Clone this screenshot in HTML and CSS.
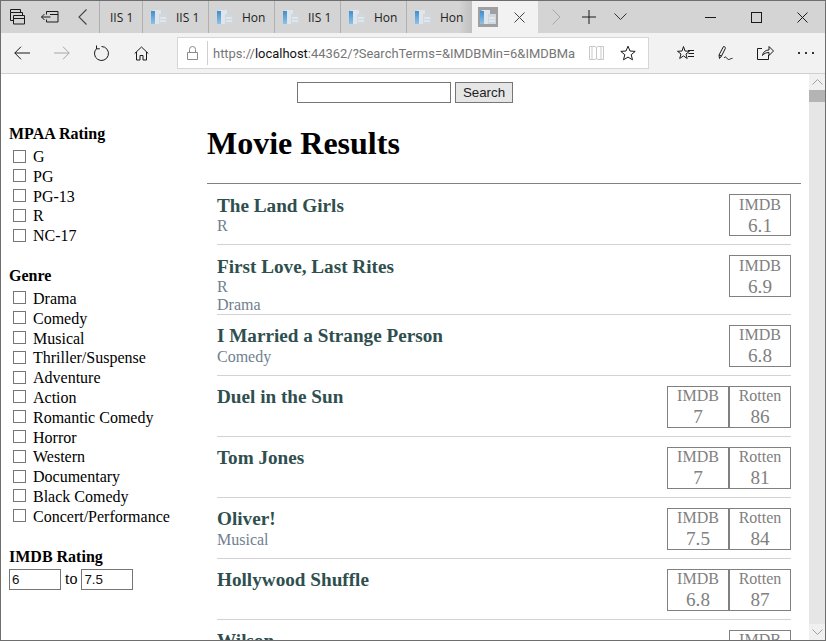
FILE: index.html
```html
<!DOCTYPE html>
<html lang="en">
<head>
<meta charset="utf-8">
<title>Movie Results</title>
<link rel="stylesheet" href="styles.css">
</head>
<body>
<svg class="defs" width="0" height="0" aria-hidden="true">
  <defs>
    <linearGradient id="favblue" x1="0" y1="0" x2="0" y2="1">
      <stop offset="0" stop-color="#3f8fd0"/>
      <stop offset="1" stop-color="#8fc2e6"/>
    </linearGradient>
  </defs>
  <symbol id="fav" viewBox="0 0 16 16">
    <path d="M2 1h8v14H2z" fill="#dfe5ea"/>
    <path d="M0 2h4v13H0z" fill="url(#favblue)"/>
    <path d="M8 5h8v10H8z" fill="#cfd8df"/>
    <path d="M9 9h6M9 12h6" stroke="#f1f4f6" fill="none"/>
  </symbol>
</svg>
<div class="window">
  <div class="tabbar">
    <div class="tabtools">
      <button class="tool"><svg width="16" height="16" viewBox="0 0 16 16"><path d="M.5 3.500V.5h10v3M.5 3.500h12v3M.5 3.500v8h3M3.500 6.500h11v8.500h-11zM3.500 9.500h11" fill="none" stroke="#1a1a1a"/></svg></button>
      <button class="tool"><svg width="18" height="12" viewBox="0 0 18 12"><path d="M.5 6h9M3.500 3 .5 6l3 3M5.500 3.500V.5h11.500v10.500H5.500V8.500M9 3.500h8" fill="none" stroke="#1a1a1a"/></svg></button>
      <button class="tool"><svg width="10" height="16" viewBox="0 0 10 16"><path d="M8.500.5 1 8l7.500 7.500" fill="none" stroke="#444" stroke-width="1.100"/></svg></button>
    </div>
    <div class="tab tab-first">IIS 1</div>
    <div class="tab"><svg class="favicon"><use href="#fav"/></svg>IIS 1</div>
    <div class="tab"><svg class="favicon"><use href="#fav"/></svg>Hon</div>
    <div class="tab"><svg class="favicon"><use href="#fav"/></svg>IIS 1</div>
    <div class="tab"><svg class="favicon"><use href="#fav"/></svg>Hon</div>
    <div class="tab tab-last"><svg class="favicon"><use href="#fav"/></svg>Hon</div>
    <div class="tab-active">
      <span class="fav-box"><svg class="favicon-a"><use href="#fav"/></svg></span>
      <svg width="11" height="11" viewBox="0 0 11 11"><path d="M.5.5l10 10M10.500.5l-10 10" stroke="#444" fill="none"/></svg>
    </div>
    <div class="tabactions">
      <svg class="ta-next" width="9" height="16" viewBox="0 0 9 16"><path d="M.5.5 8 8 .5 15.500" fill="none" stroke="#a8a8a8"/></svg>
      <svg class="ta-plus" width="14" height="14" viewBox="0 0 14 14"><path d="M7 0v14M0 7h14" stroke="#1a1a1a" fill="none"/></svg>
      <svg class="ta-down" width="13" height="8" viewBox="0 0 13 8"><path d="M.5.5l6 6 6-6" stroke="#333" fill="none"/></svg>
    </div>
    <div class="winctl">
      <span class="wc"><svg width="11" height="1" viewBox="0 0 11 1"><path d="M0 .5h11" stroke="#1a1a1a"/></svg></span>
      <span class="wc"><svg width="11" height="11" viewBox="0 0 11 11"><rect x=".5" y=".5" width="10" height="10" fill="none" stroke="#1a1a1a"/></svg></span>
      <span class="wc"><svg width="11" height="11" viewBox="0 0 11 11"><path d="M.5.5l10 10M10.500.5l-10 10" stroke="#1a1a1a" fill="none"/></svg></span>
    </div>
  </div>
  <div class="toolbar">
    <div class="nav">
      <svg width="16" height="14" viewBox="0 0 16 14"><path d="M16 7H.8M7 .7.800 7 7 13.300" fill="none" stroke="#1a1a1a"/></svg>
      <svg width="16" height="14" viewBox="0 0 16 14"><path d="M0 7h15.200M9 .7 15.200 7 9 13.300" fill="none" stroke="#a6a6a6"/></svg>
      <svg width="16" height="16" viewBox="0 0 16 16"><path d="M7.500 1.500A7 7 0 1 1 2.800 3.300M2.500 .5v3.300h3.300" fill="none" stroke="#1a1a1a"/></svg>
      <svg width="15" height="15" viewBox="0 0 15 15"><path d="M.7 7.500 7.500 1l6.800 6.500M2.500 6v8h3.500V9.500h3V14h3.500V6" fill="none" stroke="#1a1a1a"/></svg>
    </div>
    <div class="urlbar">
      <svg class="lock" width="11" height="14" viewBox="0 0 11 14"><path d="M.5 6.500h10v7H.5zM2.500 6.500V3.500a3 3 0 0 1 6 0v3" fill="none" stroke="#8a8a8a"/></svg>
      <span class="urlsep"></span>
      <span class="url">https://<b>localhost</b>:44362/?SearchTerms=&amp;IMDBMin=6&amp;IMDBMa</span>
      <svg class="read" width="15" height="14" viewBox="0 0 15 14"><path d="M.5.500h5.500l1.500 1 1.500-1h5.500v13H9l-1.500-.8-1.500.8H.5zM7.500 1.500v11.500M3 .5v13M12 .5v13" fill="none" stroke="#c8c8c8"/></svg>
      <svg class="star" width="16" height="16" viewBox="0 0 16 16"><path d="M8 1.200l2 4.800 5.200.4-4 3.300 1.300 5.100L8 12.100l-4.500 2.700 1.300-5.100-4-3.300L6 6z" fill="none" stroke="#1a1a1a"/></svg>
    </div>
    <div class="hub">
      <svg width="17" height="16" viewBox="0 0 17 16"><path d="M6.500 1.500 8 6l4.500.3-3.500 2.700 1.200 4.500-3.700-2.600-3.800 2.600 1.300-4.500L.5 6.300 5 6zM11 5.500h6M11.500 8.500h5.500M11 11.500h6" fill="none" stroke="#1a1a1a"/></svg>
      <svg width="15" height="17" viewBox="0 0 15 17"><path d="M1.500 13.500 1 10 5.500 1.500c1.500 0 2 .8 1.800 2L3.500 11zM1 10l2.500 1M6 13c2-3 3 1.500 4.500 1.500s2-1 4-1.200" fill="none" stroke="#1a1a1a"/></svg>
      <svg width="17" height="16" viewBox="0 0 17 16"><path d="M5 3.500H.5v11h11V10M5.500 10.500C6 7 8.500 5 12 5V1.500L16.500 6 12 10.500V7.500c-3 0-5 1-6.500 3z" fill="none" stroke="#1a1a1a"/></svg>
      <svg width="16" height="2" viewBox="0 0 16 2"><path d="M0 0h2v2H0zM7 0h2v2H7zM14 0h2v2h-2z" fill="#333"/></svg>
    </div>
  </div>
  <div class="viewport">
    <div class="page">
      <form class="searchbar">
        <input class="search-input" type="text" aria-label="Search">
        <button class="search-btn" type="button">Search</button>
      </form>
      <div class="columns">
        <aside class="sidebar">
          <h3 class="filter-title">MPAA Rating</h3>
          <ul class="checks">
            <li><label><input type="checkbox">G</label></li>
            <li><label><input type="checkbox">PG</label></li>
            <li><label><input type="checkbox">PG-13</label></li>
            <li><label><input type="checkbox">R</label></li>
            <li><label><input type="checkbox">NC-17</label></li>
          </ul>
          <h3 class="filter-title">Genre</h3>
          <ul class="checks">
            <li><label><input type="checkbox">Drama</label></li>
            <li><label><input type="checkbox">Comedy</label></li>
            <li><label><input type="checkbox">Musical</label></li>
            <li><label><input type="checkbox">Thriller/Suspense</label></li>
            <li><label><input type="checkbox">Adventure</label></li>
            <li><label><input type="checkbox">Action</label></li>
            <li><label><input type="checkbox">Romantic Comedy</label></li>
            <li><label><input type="checkbox">Horror</label></li>
            <li><label><input type="checkbox">Western</label></li>
            <li><label><input type="checkbox">Documentary</label></li>
            <li><label><input type="checkbox">Black Comedy</label></li>
            <li><label><input type="checkbox">Concert/Performance</label></li>
          </ul>
          <h3 class="filter-title">IMDB Rating</h3>
          <div class="range">
            <input class="range-input" type="text" value="6" aria-label="Min">
            <span>to</span>
            <input class="range-input" type="text" value="7.5" aria-label="Max">
          </div>
        </aside>
        <main class="results">
          <h1 class="results-title">Movie Results</h1>
          <hr class="rule">
          <article class="movie">
            <div class="info"><h4>The Land Girls</h4><p>R</p></div>
            <div class="scores"><div class="score">IMDB<b>6.1</b></div></div>
          </article>
          <article class="movie">
            <div class="info"><h4>First Love, Last Rites</h4><p>R</p><p>Drama</p></div>
            <div class="scores"><div class="score">IMDB<b>6.9</b></div></div>
          </article>
          <article class="movie">
            <div class="info"><h4>I Married a Strange Person</h4><p>Comedy</p></div>
            <div class="scores"><div class="score">IMDB<b>6.8</b></div></div>
          </article>
          <article class="movie">
            <div class="info"><h4>Duel in the Sun</h4></div>
            <div class="scores"><div class="score">IMDB<b>7</b></div><div class="score">Rotten<b>86</b></div></div>
          </article>
          <article class="movie">
            <div class="info"><h4>Tom Jones</h4></div>
            <div class="scores"><div class="score">IMDB<b>7</b></div><div class="score">Rotten<b>81</b></div></div>
          </article>
          <article class="movie">
            <div class="info"><h4>Oliver!</h4><p>Musical</p></div>
            <div class="scores"><div class="score">IMDB<b>7.5</b></div><div class="score">Rotten<b>84</b></div></div>
          </article>
          <article class="movie">
            <div class="info"><h4>Hollywood Shuffle</h4></div>
            <div class="scores"><div class="score">IMDB<b>6.8</b></div><div class="score">Rotten<b>87</b></div></div>
          </article>
          <article class="movie">
            <div class="info"><h4>Wilson</h4></div>
            <div class="scores"><div class="score">IMDB<b>7</b></div></div>
          </article>
        </main>
      </div>
    </div>
    <div class="scrollbar">
      <span class="sb-btn"><svg width="11" height="6" viewBox="0 0 11 6"><path d="M.5 5.500l5-5 5 5" fill="none" stroke="#a0a0a0"/></svg></span>
      <span class="sb-thumb"></span>
      <span class="sb-track"></span>
      <span class="sb-btn"><svg width="11" height="6" viewBox="0 0 11 6"><path d="M.5.500l5 5 5-5" fill="none" stroke="#a0a0a0"/></svg></span>
    </div>
  </div>
</div>
</body>
</html>
```

FILE: styles.css
```css
* { box-sizing: border-box; }
html, body { margin: 0; padding: 0; height: 100%; overflow: hidden; background: #fff; }
.defs { position: absolute; }
.window {
  width: 826px; height: 641px;
  border: 1px solid #6e6e6e;
  display: flex; flex-direction: column;
  overflow: hidden;
}
.tabbar {
  height: 32px; flex: none;
  display: flex; align-items: stretch;
  background: #d4d4d4;
  font: 12px "Open Sans", sans-serif;
  color: #222;
}
.tabtools { width: 98px; display: flex; flex: none; align-items: center; padding-left: 9px; }
.tool { background: none; border: 0; padding: 0; display: flex; }
.tool:nth-child(1) { margin-right: 15px; }
.tool:nth-child(2) { margin-right: 19px; }
.tab {
  width: 66px; flex: none;
  display: flex; align-items: center;
  padding-left: 8px; gap: 9px;
  border-left: 1px solid #b0b0b0;
}
.tab-first { width: 43px; padding-left: 10px; }
.tab-last { background: linear-gradient(90deg, #d4d4d4 80%, #c0c0c0); }
.favicon { width: 16px; height: 16px; flex: none; }
.tab-active {
  width: 66px; flex: none;
  background: #f2f2f2;
  display: flex; align-items: center;
  padding-left: 6px; gap: 16px;
}
.fav-box { width: 20px; height: 20px; background: #a0a0a0; display: flex; align-items: center; justify-content: center; }
.favicon-a { width: 16px; height: 16px; }
.tabactions { display: flex; align-items: center; padding-left: 14px; flex: none; }
.ta-next { margin-right: 21px; }
.ta-plus { margin-right: 18px; }
.winctl { margin-left: auto; display: flex; align-items: center; }
.wc { width: 46px; display: flex; justify-content: center; align-items: center; }
.toolbar {
  height: 41px; flex: none;
  background: #f2f2f2;
  border-bottom: 1px solid #d0d0d0;
  display: flex; align-items: center;
}
.nav { width: 176px; flex: none; display: flex; align-items: center; padding-left: 13px; gap: 24px; }
.urlbar {
  width: 472px; height: 32px; flex: none;
  background: #fff;
  border: 1px solid #d6d6d6;
  display: flex; align-items: center;
  padding-left: 9px;
  font: 12.950px Roboto, sans-serif;
  color: #767676;
  white-space: nowrap;
}
.lock { flex: none; }
.urlsep { width: 1px; height: 24px; background: #cfcfcf; margin: 0 5px 0 9px; flex: none; }
.url { width: 376px; flex: none; overflow: hidden; }
.url b { font-weight: 400; color: #111; }
.read { flex: none; }
.star { margin-left: 16px; flex: none; }
.hub { flex: 1; display: flex; align-items: center; padding-left: 28px; gap: 24px; }
.viewport { flex: 1; display: flex; min-height: 0; }
.page {
  width: 808px; flex: none;
  background: #fff;
  font: 16px "Liberation Serif", serif;
  color: #000;
  overflow: hidden;
}
.scrollbar { width: 16px; flex: none; background: #e6e6e6; display: flex; flex-direction: column; }
.sb-btn { height: 16px; display: flex; align-items: center; justify-content: center; background: #f0f0f0; flex: none; }
.sb-thumb { height: 12px; background: #b4b4b4; flex: none; }
.sb-track { flex: 1; }
.searchbar { display: flex; justify-content: center; gap: 4px; padding-top: 8px; height: 43px; align-items: flex-start; }
.search-input { width: 154px; height: 21px; border: 1px solid #767676; padding: 1px 2px; margin: 0; background: #fff; border-radius: 0; }
.search-btn {
  width: 58px; height: 21px;
  border: 1px solid #767676; border-radius: 0;
  background: #e6e6e6; color: #222;
  font: 13.333px "Liberation Sans", sans-serif;
  padding: 0; margin: 0;
}
.columns { display: flex; padding-top: 8px; }
.sidebar { width: 206px; flex: none; padding-left: 8px; }
.filter-title { font-size: 16px; font-weight: 700; margin: 0 0 4px; line-height: 18px; }
.checks { list-style: none; margin: 0 0 21px; padding: 0; }
.checks li { height: 19.800px; line-height: 20px; padding-left: 4px; }
.checks label { display: flex; align-items: center; height: 20px; }
.checks input {
  appearance: none; -webkit-appearance: none;
  width: 13px; height: 13px;
  border: 1px solid #767676; border-radius: 0;
  background: #fff;
  margin: 0 7px 0 0;
  flex: none;
  position: relative; top: -1px;
}
.range { display: flex; align-items: center; gap: 4px; margin-top: -1px; }
.range-input {
  width: 52px; height: 21px;
  border: 1px solid #767676; border-radius: 0;
  padding: 1px 2px; margin: 0;
  font: 13.333px "Liberation Sans", sans-serif;
  color: #111;
}
.results { flex: 1; min-width: 0; padding-right: 8px; }
.results-title { font-size: 32px; font-weight: 700; margin: 0; line-height: 37px; }
.rule { border: 0; height: 1px; background: #808080; margin: 21.400px 0 0; }
.movie {
  margin: 0 10px;
  display: flex; justify-content: space-between; align-items: flex-start;
  border-bottom: 1px solid #d3d3d3;
  padding-top: 10px;
}
.info { margin: -.2px 0 -.850px; }
.info h4 { font-size: 19.200px; font-weight: 700; color: #2f4f4f; margin: 0; height: 23.200px; line-height: 23px; }
.info p { margin: 0; line-height: 18px; font-size: 16px; color: #708090; }
.scores { display: flex; flex: none; margin-bottom: 8px; }
.score {
  width: 62px; height: 42px;
  border: 1px solid #808080;
  color: #808080;
  text-align: center;
  font-size: 16px; line-height: 18px;
  padding-top: .5px;
}
.score b { display: block; font-weight: 400; font-size: 19.200px; line-height: 23px; }
```
